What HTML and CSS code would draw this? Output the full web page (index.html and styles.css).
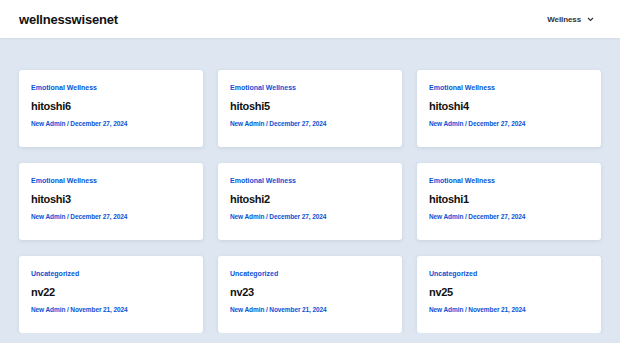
FILE: index.html
```html
<!DOCTYPE html>
<html lang="en">
<head>
    <meta charset="UTF-8">
    <meta name="viewport" content="width=device-width, initial-scale=1.0">
    <title>wellnesswisenet</title>
    <link rel="stylesheet" href="styles.css">
</head>
<body>
    <header class="site-header">
        <a class="logo" href="#">wellnesswisenet</a>
        <nav class="menu">
            <span>Wellness</span>
            <svg class="chevron" width="7" height="5" viewBox="0 0 7 5"><path d="M1 1l2.5 2.5L6 1" fill="none" stroke="#333" stroke-width="1.2"/></svg>
        </nav>
    </header>

    <main class="posts">
        <article class="card">
            <div class="cat">Emotional Wellness</div>
            <h2>hitoshi6</h2>
            <div class="meta">New Admin / December 27, 2024</div>
        </article>
        <article class="card">
            <div class="cat">Emotional Wellness</div>
            <h2>hitoshi5</h2>
            <div class="meta">New Admin / December 27, 2024</div>
        </article>
        <article class="card">
            <div class="cat">Emotional Wellness</div>
            <h2>hitoshi4</h2>
            <div class="meta">New Admin / December 27, 2024</div>
        </article>
        <article class="card">
            <div class="cat">Emotional Wellness</div>
            <h2>hitoshi3</h2>
            <div class="meta">New Admin / December 27, 2024</div>
        </article>
        <article class="card">
            <div class="cat">Emotional Wellness</div>
            <h2>hitoshi2</h2>
            <div class="meta">New Admin / December 27, 2024</div>
        </article>
        <article class="card">
            <div class="cat">Emotional Wellness</div>
            <h2>hitoshi1</h2>
            <div class="meta">New Admin / December 27, 2024</div>
        </article>
        <article class="card">
            <div class="cat">Uncategorized</div>
            <h2>nv22</h2>
            <div class="meta">New Admin / November 21, 2024</div>
        </article>
        <article class="card">
            <div class="cat">Uncategorized</div>
            <h2>nv23</h2>
            <div class="meta">New Admin / November 21, 2024</div>
        </article>
        <article class="card">
            <div class="cat">Uncategorized</div>
            <h2>nv25</h2>
            <div class="meta">New Admin / November 21, 2024</div>
        </article>
    </main>
</body>
</html>
```

FILE: styles.css
```css
body {
    font-family: "Liberation Sans", Arial, sans-serif;
    margin: 0;
    padding: 0;
    background-color: #dee7f1;
    color: #111;
}

.site-header {
    display: flex;
    align-items: center;
    justify-content: space-between;
    height: 38px;
    padding: 0 26px 0 19px;
    background-color: #fff;
    box-shadow: 0 1px 2px rgba(0, 0, 0, 0.06);
}

.logo {
    font-size: 13px;
    font-weight: bold;
    letter-spacing: -0.2px;
    color: #111;
    text-decoration: none;
}

.menu {
    display: flex;
    align-items: center;
    gap: 6px;
    font-size: 8px;
    font-weight: bold;
    letter-spacing: -0.1px;
    color: #333;
}

.posts {
    display: grid;
    grid-template-columns: repeat(3, 184px);
    column-gap: 15px;
    row-gap: 16px;
    padding: 32px 19px 0;
}

.card {
    height: 77px;
    box-sizing: border-box;
    padding: 14px 12px;
    background-color: #fff;
    border-radius: 3px;
    box-shadow: 0 1px 4px rgba(40, 60, 90, 0.12);
}

.cat {
    font-size: 7px;
    font-weight: bold;
    color: #0a52d6;
}

.card h2 {
    margin: 9px 0 8px;
    font-size: 11px;
    letter-spacing: -0.3px;
    color: #111;
}

.meta {
    font-size: 6.5px;
    font-weight: bold;
    letter-spacing: -0.1px;
    color: #0a52d6;
}
```
